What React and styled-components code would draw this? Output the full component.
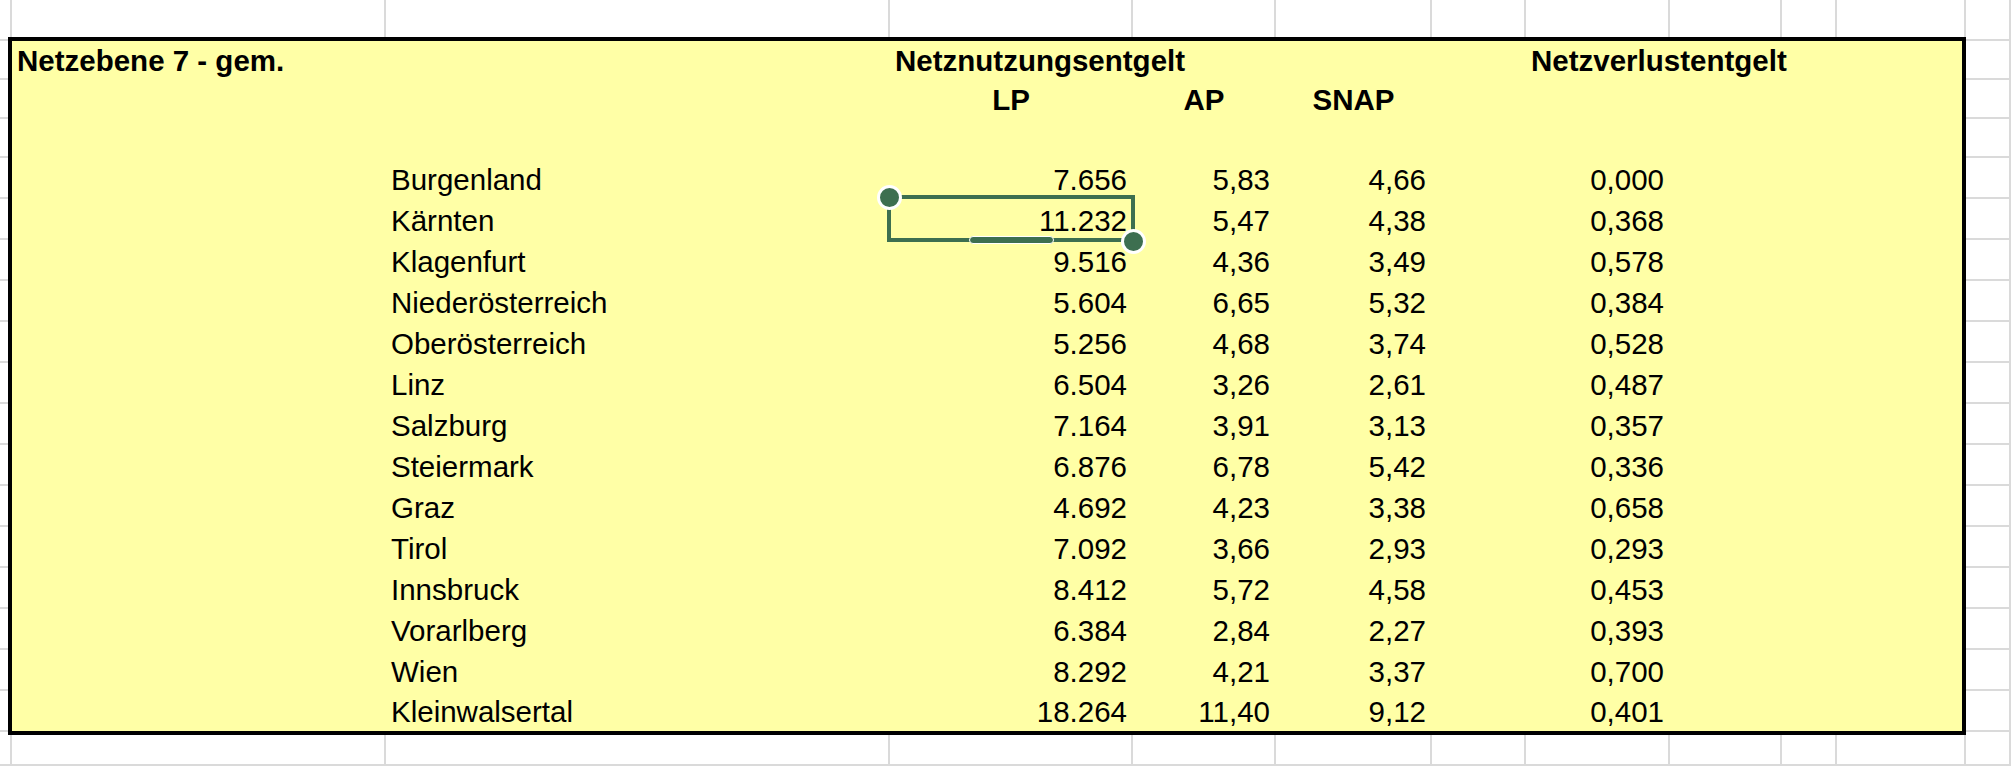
import React from 'react';
import styled, { createGlobalStyle } from 'styled-components';

// sheet geometry (px) - gridline sits on the right / bottom edge of each track
const COLS = [12, 374, 504, 243, 143, 156, 94, 144, 112, 55, 129];
const ROWS = [41, 39, 39, 39, ...Array(14).fill(41)];
const INNER_COLS = '374px 504px 243px 143px 156px 94px 144px 112px 55px 1fr';

const GREEN = '#3d6f50';

const rows = [
  ['Burgenland', '7.656', '5,83', '4,66', '0,000'],
  ['Kärnten', '11.232', '5,47', '4,38', '0,368'],
  ['Klagenfurt', '9.516', '4,36', '3,49', '0,578'],
  ['Niederösterreich', '5.604', '6,65', '5,32', '0,384'],
  ['Oberösterreich', '5.256', '4,68', '3,74', '0,528'],
  ['Linz', '6.504', '3,26', '2,61', '0,487'],
  ['Salzburg', '7.164', '3,91', '3,13', '0,357'],
  ['Steiermark', '6.876', '6,78', '5,42', '0,336'],
  ['Graz', '4.692', '4,23', '3,38', '0,658'],
  ['Tirol', '7.092', '3,66', '2,93', '0,293'],
  ['Innsbruck', '8.412', '5,72', '4,58', '0,453'],
  ['Vorarlberg', '6.384', '2,84', '2,27', '0,393'],
  ['Wien', '8.292', '4,21', '3,37', '0,700'],
  ['Kleinwalsertal', '18.264', '11,40', '9,12', '0,401'],
];

const GlobalStyle = createGlobalStyle`
  html, body {
    margin: 0;
    padding: 0;
    background: #fff;
  }
  body {
    font-family: "Liberation Sans", Arial, sans-serif;
    color: #000;
    overflow: hidden;
  }
`;

const Page = styled.div`
  display: grid;
  width: 2011px;
  height: 766px;
  overflow: hidden;
  & > * {
    grid-area: 1 / 1;
  }
`;

const Gridlines = styled.div`
  display: grid;
  grid-template-columns: ${COLS.map(c => `${c}px`).join(' ')} 1fr;
  grid-template-rows: ${ROWS.map(r => `${r}px`).join(' ')} 1fr;
`;

const GridCell = styled.div`
  box-sizing: border-box;
  border-right: 2px solid #dadada;
  border-bottom: 2px solid #dadada;
`;

const Sheet = styled.div`
  display: grid;
  grid-template-columns: ${COLS.map(c => `${c}px`).join(' ')} 1fr;
  grid-template-rows: ${ROWS.map(r => `${r}px`).join(' ')} 1fr;
`;

const Block = styled.div`
  grid-column: 2 / 12;
  grid-row: 2 / 19;
  margin: -4px 0 -3px -4px;
  border: 4px solid #000;
  background: #ffffa6;
  display: flex;
  flex-direction: column;
  overflow: visible;
`;

const Row = styled.div`
  display: grid;
  grid-template-columns: ${INNER_COLS};
  height: ${p => p.$h}px;
  flex: none;
`;

const Cell = styled.div`
  position: relative;
  display: flex;
  align-items: flex-end;
  justify-content: ${p => (p.$align === 'right' ? 'flex-end' : p.$align === 'center' ? 'center' : 'flex-start')};
  padding: 0 6px 2px 5px;
  min-width: 0;
  white-space: nowrap;
  font-size: 29.5px;
  line-height: normal;
  font-weight: ${p => (p.$bold ? 700 : 400)};
`;

const Selection = styled.div`
  position: absolute;
  left: -3px;
  top: -4px;
  right: -2px;
  bottom: -2px;
  border: 4px solid ${GREEN};
  pointer-events: none;
`;

const Handle = styled.span`
  position: absolute;
  box-sizing: border-box;
  width: 25px;
  height: 25px;
  border-radius: 50%;
  background: ${GREEN};
  border: 3px solid #fff;
  ${p => (p.$corner === 'tl' ? 'left: -14px; top: -14.5px;' : 'right: -15px; bottom: -15.5px;')}
`;

const Pill = styled.span`
  position: absolute;
  box-sizing: border-box;
  left: calc(50% - 42px);
  bottom: -6px;
  width: 85px;
  height: 8px;
  border-radius: 4px;
  background: ${GREEN};
  border: 1.5px solid #fff;
`;

const Empty = ({ n }) => Array.from({ length: n }, (_, i) => <Cell key={`e${i}`} />);

const App = () => {
  const gridCells = [];
  for (let r = 0; r < ROWS.length + 1; r++) {
    for (let c = 0; c < COLS.length + 1; c++) {
      gridCells.push(<GridCell key={`${r}-${c}`} />);
    }
  }

  return (
    <>
      <GlobalStyle />
      <Page>
        <Gridlines>{gridCells}</Gridlines>
        <Sheet>
          <Block>
            <Row $h={39}>
              <Cell $bold>Netzebene 7 - gem.</Cell>
              <Cell />
              <Cell $bold>Netznutzungsentgelt</Cell>
              <Empty n={3} />
              <Cell $bold>Netzverlustentgelt</Cell>
              <Empty n={3} />
            </Row>
            <Row $h={39}>
              <Empty n={2} />
              <Cell $bold $align="center">LP</Cell>
              <Cell $bold $align="center">AP</Cell>
              <Cell $bold $align="center">SNAP</Cell>
              <Empty n={5} />
            </Row>
            <Row $h={39}>
              <Empty n={10} />
            </Row>
            {rows.map(([name, lp, ap, snap, nv], i) => (
              <Row key={name} $h={i === rows.length - 1 ? 40 : 41}>
                <Cell />
                <Cell>{name}</Cell>
                <Cell $align="right">
                  {lp}
                  {name === 'Kärnten' && (
                    <Selection>
                      <Handle $corner="tl" />
                      <Pill />
                      <Handle $corner="br" />
                    </Selection>
                  )}
                </Cell>
                <Cell $align="right">{ap}</Cell>
                <Cell $align="right">{snap}</Cell>
                <Cell />
                <Cell $align="right">{nv}</Cell>
                <Empty n={3} />
              </Row>
            ))}
          </Block>
        </Sheet>
      </Page>
    </>
  );
};

export default App;
